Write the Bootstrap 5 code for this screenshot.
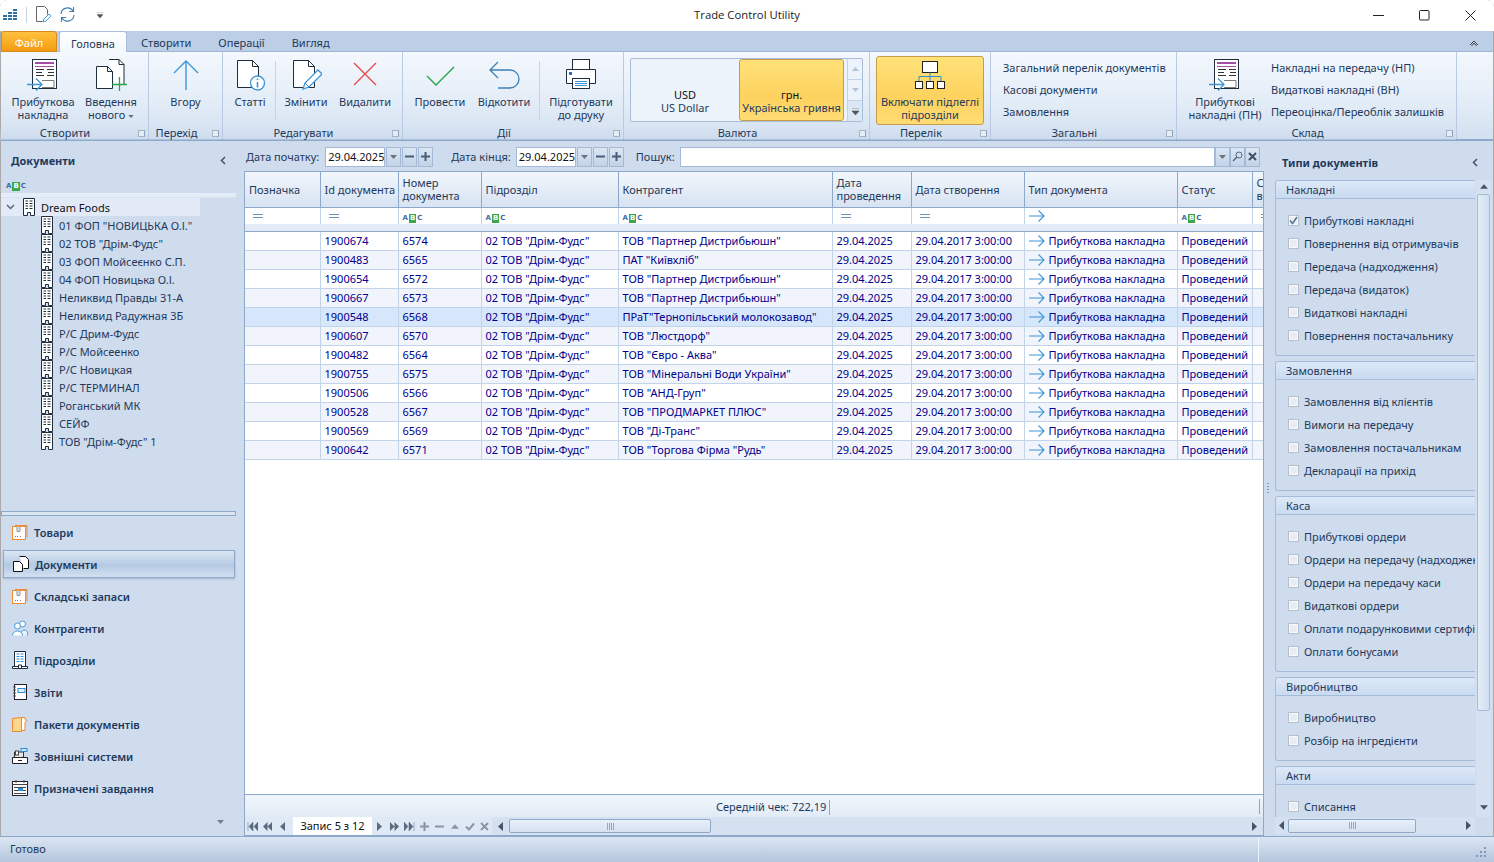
<!DOCTYPE html>
<html lang="uk">
<head>
<meta charset="utf-8">
<title>Trade Control Utility</title>
<link href="https://cdn.jsdelivr.net/npm/bootstrap@5.3.0/dist/css/bootstrap.min.css" rel="stylesheet">
<style>
html,body{height:100%;overflow:hidden;background:#fff}
body{font-family:"Noto Sans","DejaVu Sans",sans-serif;font-size:11px;line-height:13px;color:#1e395b}
.app{width:1494px;height:862px;outline:1px solid #a9a9a9;outline-offset:-1px;border-radius:7px 7px 0 0;overflow:hidden;display:flex;flex-direction:column}
.ttl{height:31px;background:#fff;flex:none;position:relative}
.ttl-q{gap:0;padding:6px 0 0 2px}
.ttl-name{position:absolute;left:0;right:0;top:7px;text-align:center;font:11.3px/16px "Open Sans",sans-serif;color:#222}
.ttl-b{position:absolute;top:0;right:1px;display:flex}
.ttl-b span{width:46px;height:30px;display:flex;align-items:center;justify-content:center}
.tabs{height:21px;background:#bdcfe6;flex:none;border-bottom:1px solid #9db6d6;padding-left:1px;gap:0}
.tb-file{width:56px;padding:4px 0 0;height:21px;text-align:center;color:#fff;background:linear-gradient(#ffc13d,#f49b0f);border:1px solid #d58a20;border-radius:3px 3px 0 0}
.tb-on{width:68px;margin-left:2px;padding:5px 0 0;text-align:center;height:22px;background:linear-gradient(#fff,#f2f7fd);border:1px solid #a9bfdc;border-bottom:0;border-radius:3px 3px 0 0}
.tb-a{padding:5px 0 0;margin-left:14px}
.tb-col{margin-left:auto;padding:4px 15px 0 0}
.rib{height:89px;flex:none;background:linear-gradient(#f4f8fd,#e2ecf7 60%,#d3e0f0);border-bottom:2px solid #8ea8ca}
.rg{height:87px;border-right:1px solid #b9cbe2;position:relative;flex:none;display:flex;flex-direction:column}
.rg-in{height:72px;display:flex;padding-top:3px}
.rg-lb{position:absolute;left:0;right:0;bottom:-1px;height:14px;text-align:center;line-height:14px;padding-right:18px;background:linear-gradient(rgba(200,216,235,0),rgba(200,216,235,.55))}
.rg-lc{position:absolute;right:3px;bottom:2px;width:7px;height:7px;border:1px solid #a5b5c8;border-right-color:#8ea0b6;background:#e6ecf4}
.rb{display:flex;flex-direction:column;align-items:center;text-align:center;padding-top:4px;flex:none}
.rb svg.rb-ic{display:block;margin-bottom:4px}
.rb-sp{width:1px;height:60px;background:#c5d4e7;margin:6px 0 0;flex:none}
.rl{display:flex;flex-direction:column;padding-top:2px;white-space:nowrap}
.rl span{height:22px;line-height:22px}
.gal{margin:3px 0 0 6px;width:233px;height:64px;border:1px solid #a9bdd8;background:#edf3fb;border-radius:2px;display:flex}
.gal-i{height:62px;text-align:center;padding-top:29px;flex:none}
.gal-u{width:108px;color:#1e395b}
.gal-h{width:105px;padding-top:28px;background:linear-gradient(#ffe27a,#fdd25e 60%,#ffdc74);border:1px solid #c89b4a;border-radius:3px}
.gal-k{color:#111}
.gal-s{margin-left:3px;width:15px;display:flex;flex-direction:column;border-left:1px solid #c3d3e7;color:#b3c2d6}
.gal-s span{flex:1;display:flex;align-items:center;justify-content:center;border-bottom:1px solid #c3d3e7}
.gal-s span:last-child{border-bottom:0;background:#dce7f4}
.rb-hot{width:108px;height:69px;margin:1px 0 0 6px;background:linear-gradient(#ffe27a,#fdd25e 60%,#ffdc74);border:1px solid #c89b4a;border-radius:3px;padding-top:3px}
.rb-hot svg.rb-ic{margin-bottom:3px}
.main{flex:1;min-height:0;background:#cfdcee;display:flex}
.lp{width:244px;flex:none;display:flex;flex-direction:column;padding-left:1px}
.lp-h{height:38px;padding:1px 18px 0 10px;font-weight:700;display:flex;align-items:center;justify-content:space-between}
.abc{display:inline-flex;font:700 7px/9px "DejaVu Sans",sans-serif;color:#3a6ea5;letter-spacing:0;align-items:center}
.abc b{background:#3ea64a;color:#fff;padding:0 1px;font-weight:700;margin:0 1px}
.lp-f{height:14px;padding:0 0 0 5px;display:flex;align-items:center}
.lp-sep{height:5px;background:#e4ecf7;border-bottom:1px solid #d8e3f1;margin-right:8px;flex:none}
.tree{height:313px;flex:none;color:#1e395b}
.tr-root{height:18px;width:199px;background:#e1eaf6;display:flex;align-items:center;color:#111;padding-left:5px}
.tr-root svg:first-child{margin-right:7px}
.tr-root svg:nth-child(2){margin-right:5px}
.tr-i{height:18px;display:flex;align-items:center;padding-left:39px;gap:5px;white-space:nowrap}
.sp-l{height:5px;border:1px solid #8ea8ca;background:#dce6f3;margin:0 8px 0 0;flex:none}
.nv{padding:0;flex:1}
.nv-i{height:32px;display:flex;align-items:center;gap:6px;font-weight:600;padding-left:11px;color:#1e395b}
.nv-on{height:28px;margin:2px 9px 2px 2px;padding-left:9px;border:1px solid #8ea8ca;background:linear-gradient(#dbe6f3,#b4c9e2 55%,#d3e1f1);box-shadow:0 1px 2px rgba(80,110,150,.35)}
.nv-dn{height:28px;text-align:right;padding:10px 20px 0 0;color:#6f7f93}
.cp{width:1020px;flex:none;display:flex;flex-direction:column}
.fb{height:30px;flex:none;display:flex;align-items:center;white-space:nowrap;padding:1px 0 0 2px}
.fld{height:20px;border-radius:0;padding:0 0 0 2px;font:11px/18px "Noto Sans",sans-serif;border:1px solid #a3b9d6;color:#111;background:#fff;flex:none;min-height:0}
.fld-d{width:60px;margin:0 1px 0 5px}
.fld-d1{margin-left:6px}
.fld-s{width:535px;margin-left:5px}
.fbt{width:15px;height:20px;background:linear-gradient(#dbe6f3,#c3d4e8);border:1px solid #a3b9d6;margin-right:1px;display:flex;align-items:center;justify-content:center;flex:none}
.grid{flex:1;min-height:0;background:#fff;border:1px solid #8ea8ca;border-bottom:0;display:flex;flex-direction:column}
.g-t{flex:1;min-height:0;overflow:hidden}
.tbl{table-layout:fixed;width:1030px;margin:0;border-collapse:collapse;--bs-table-bg:transparent;color:#00008b}
.tbl th,.tbl td{padding:0 4px;border:0;border-right:1px solid #c2d4ea;border-bottom:1px solid #c2d4ea;white-space:nowrap;overflow:hidden;font-weight:400;vertical-align:middle;height:19px;color:#00008b;box-shadow:none}
.tbl tr.hd th{height:35px;background:linear-gradient(#f1f6fc,#d7e3f2);border-right:1px solid #8ea8ca;border-bottom:1px solid #8ea8ca;color:#1e395b;line-height:13px;padding-top:0}
.tbl tr.fl td{height:17px;background:#fff;color:#5d7ea5;border-bottom:0}
.tbl tr.gp td{height:7px;padding:0;background:#e2ebf6;border:0;border-bottom:1px solid #8ea8ca}
.tbl tr.alt td{background:#f1f5fb}
.tbl tr.cur td{background:#d6e6fb}
.eq{display:block;width:10px;height:4px;border-top:1px solid #6f90b8;border-bottom:1px solid #6f90b8;margin-left:4px}
.ty{display:flex;align-items:center;gap:4px}
.g-s{height:23px;flex:none;background:linear-gradient(#f1f6fc,#e1ebf6);border-top:1px solid #8ea8ca;display:flex;color:#1e395b;padding-top:5px;position:relative}
.g-sv{margin-left:471px;padding-right:3px;border-right:1px solid #8ea8ca;height:15px}
.g-sr{position:absolute;left:1014px;top:4px;height:15px;width:1px;background:#8ea8ca}
.g-n{height:19px;flex:none;display:flex;background:#dfe9f5;align-items:center;border-bottom:1px solid #8ea8ca}
.nb{display:flex;align-items:center;justify-content:center;width:15px;height:17px;flex:none}
.n-rec{width:79px;height:18px;background:#fff;color:#111;text-align:center;line-height:18px;margin:0 0 0 3px;flex:none}
.n-sb{flex:1;height:18px;display:flex;align-items:center;background:#d5e1f0;margin-left:0;padding:0 3px;position:relative}
.sb-th{height:14px;background:linear-gradient(#e8f0f9,#d5e1f0);border:1px solid #8ea8ca;border-radius:2px;display:flex;align-items:center;justify-content:center}
.rp{flex:1;min-width:0;display:flex;flex-direction:column;position:relative}
.rp-h{height:39px;flex:none;display:flex;align-items:center;justify-content:space-between;font-weight:700;padding:3px 16px 0 18px}
.rp-b{flex:1;min-height:0;display:flex;padding-left:11px}
.rp-g{width:200px;flex:none;overflow:hidden}
.gb{border:1px solid #a5bcd9;border-right:0;border-radius:3px 0 0 3px;margin-bottom:5px;white-space:nowrap;overflow:hidden}
.gb-h{height:18px;background:linear-gradient(#dce8f7,#c9dbf1);border-bottom:1px solid #a5bcd9;padding:0 0 0 10px;line-height:17px}
.gb-b{padding:10px 0 8px 12px}
.ci{height:23px;display:flex;align-items:center;gap:5px}
.cbx{width:11px;height:11px;flex:none;border:1px solid #b3bfcd;background:#e9edf3;box-shadow:inset 0 0 0 1px #f7f9fc;display:flex;align-items:center;justify-content:center}
.rp-v{width:15px;flex:none;margin-left:1px;display:flex;flex-direction:column;align-items:center;background:#d5e1f0}
.v-th{width:13px;height:517px;background:linear-gradient(90deg,#e4edf7,#d0deef);border:1px solid #a5bcd9;border-radius:2px;margin:5px 0 94px}
.rp-hs{height:17px;flex:none;margin:0 19px 2px 11px;background:#d5e1f0;display:flex;align-items:center;padding:0 4px;justify-content:space-between}
.spl{position:absolute;left:3px;top:342px;width:2px;height:12px;background:repeating-linear-gradient(#7f99ba 0 1px,transparent 1px 3px)}
.stb{height:26px;flex:none;background:linear-gradient(#dbe6f3,#b4c6dd);border-top:1px solid #8ea8ca;display:flex;align-items:center;padding:0 0 2px 10px;position:relative}
.stb-l{position:absolute;left:1258px;top:1px;bottom:0;width:1px;background:#eef3fa}
.stb-g{position:absolute;right:8px;bottom:5px}
</style>
</head>
<body>
<svg width="0" height="0" class="position-absolute">
<defs>
<symbol id="i-inv" viewBox="0 0 32 32"><rect x="5.5" y=".5" width="24" height="29" fill="#fff" stroke="#1f2d3d"/><rect x="8" y="3" width="19" height="2" fill="#a64ca6"/><rect x="8" y="7" width="19" height="1" fill="#a64ca6"/><path d="M9 10.500h8M9 13.500h6M9 16.500h8M20 10.500h7M21 13.500h6M20 16.500h7" stroke="#333"/><path d="M15 21.500h12v7H15" fill="none" stroke="#7a7a7a"/><path d="M0 25.500h14M9 19.500l6 6-6 6" fill="none" stroke="#3d95d6" stroke-width="1.3"/></symbol>
<symbol id="i-new" viewBox="0 0 32 32"><path d="M14 .5h10l5 5v20h-9" fill="#fff" stroke="#1f2d3d"/><path d="M24 .5v5h5" fill="none" stroke="#1f2d3d"/><path d="M1.500 7.500h11l5 5v17h-16z" fill="#fff" stroke="#1f2d3d"/><path d="M12.500 7.500v5h5" fill="none" stroke="#1f2d3d"/><path d="M17 25.500h15M24.500 18v14" stroke="#27a54a" stroke-width="1.3"/></symbol>
<symbol id="i-up" viewBox="0 0 32 32"><path d="M16 31V2M4 14L16 2l12 12" fill="none" stroke="#3d95d6" stroke-width="1.4"/></symbol>
<symbol id="i-info" viewBox="0 0 32 32"><path d="M3.500 1.500h15l6 6v21h-21z" fill="#fff" stroke="#1f2d3d"/><path d="M18.500 1.500v6h6" fill="none" stroke="#1f2d3d"/><circle cx="23.500" cy="24" r="7" fill="#fff" stroke="#3d95d6" stroke-width="1.3"/><path d="M23.500 23v5.500M23.500 19.500v1.500" stroke="#3d95d6" stroke-width="1.6"/></symbol>
<symbol id="i-edit" viewBox="0 0 32 32"><path d="M3.500 1.500h15l6 6v21h-21z" fill="#fff" stroke="#1f2d3d"/><path d="M18.500 1.500v6h6" fill="none" stroke="#1f2d3d"/><path d="M13 30l2-6 13-13 4 4-13 13z" fill="#fff" stroke="#3d95d6" stroke-width="1.3"/><path d="M15 24l4 4" stroke="#3d95d6"/></symbol>
<symbol id="i-x" viewBox="0 0 32 32"><path d="M5 4l22 22M27 4L5 26" stroke="#e8474a" stroke-width="1.3" fill="none"/></symbol>
<symbol id="i-ok" viewBox="0 0 32 32"><path d="M3 17l9 9L30 8" stroke="#27a54a" stroke-width="1.4" fill="none"/></symbol>
<symbol id="i-undo" viewBox="0 0 32 32"><path d="M2 11h20a8 8 0 0 1 0 18H10M10 3l-8 8 8 8" stroke="#3f7fb5" stroke-width="1.3" fill="none"/></symbol>
<symbol id="i-prn" viewBox="0 0 32 32"><rect x="7.500" y=".5" width="17" height="10" fill="#fff" stroke="#1f2d3d"/><path d="M1.500 10.500h29v14h-6v-5h-17v5h-6z" fill="#fff" stroke="#1f2d3d"/><rect x="4" y="13" width="3" height="3" fill="#2b6fb3"/><rect x="7.500" y="19.500" width="17" height="10" fill="#fff" stroke="#1f2d3d"/><path d="M10 22.500h12M10 24.500h12M10 26.500h12" stroke="#3d95d6"/></symbol>
<symbol id="i-org" viewBox="0 0 32 32"><rect x="8.500" y="1.500" width="15" height="11" fill="#fff" stroke="#222"/><path d="M16 12.500v4M5 21v-4.500h22V21M16 16v5" fill="none" stroke="#2b8ed6"/><rect x="1.500" y="21.500" width="7" height="7" fill="#fff" stroke="#222"/><rect x="12.500" y="21.500" width="7" height="7" fill="#fff" stroke="#222"/><rect x="23.500" y="21.500" width="7" height="7" fill="#fff" stroke="#222"/></symbol>
<symbol id="i-bld" viewBox="0 0 14 18"><path d="M1.500.5h11v17h-4v-3h-3v3h-4z" fill="#fff" stroke="#1f2d3d"/><path d="M3.500 3h2.500M7.500 3h3M3.500 5.500h2.500M7.500 5.500h3M3.500 8h2.500M7.500 8h3M3.500 10.500h2.500M7.500 10.500h3" stroke="#1f2d3d"/></symbol>
<symbol id="i-bldb" viewBox="0 0 16 18"><path d="M2.500.5h11v15h-11zM.5 15.500h15v2H.5z" fill="#fff" stroke="#1f2d3d"/><path d="M4.500 3h3M8.500 3h3M4.500 5.500h3M8.500 5.500h3M4.500 8h3M8.500 8h3M4.500 10.500h3M8.500 10.500h3" stroke="#2b8ed6"/><path d="M6.500 17v-3h3v3" fill="#fff" stroke="#1f2d3d"/></symbol>
<symbol id="i-arr" viewBox="0 0 16 12"><path d="M0 6h15M9.500.5L15 6l-5.500 5.500" fill="none" stroke="#3d95d6" stroke-width="1.1"/></symbol>
<symbol id="i-box" viewBox="0 0 16 18"><path d="M3 2.500h12v12" fill="none" stroke="#ef8a2e"/><rect x=".5" y="3.500" width="13" height="13" fill="#fff" stroke="#ef8a2e"/><path d="M5 3.500v5h3v-5" fill="#ddd" stroke="#999"/><path d="M3 13.500h1M5 13.500h1M8 13.500h1" stroke="#777"/></symbol>
<symbol id="i-docs" viewBox="0 0 16 16"><path d="M6.500.5h6l3 3v9h-5" fill="#fff" stroke="#111"/><path d="M.5 5.500h6l3 3v7h-9z" fill="#fff" stroke="#111"/></symbol>
<symbol id="i-ppl" viewBox="0 0 16 16"><circle cx="10.500" cy="4" r="3" fill="#fff" stroke="#4a9bd8"/><path d="M9 15.500v-3c1-3 6-3 6.500 0v3" fill="#eaf3fb" stroke="#4a9bd8"/><circle cx="5.500" cy="6" r="3" fill="#fff" stroke="#4a9bd8"/><path d="M.5 15.500c0-6 10-6 10 0" fill="#fff" stroke="#4a9bd8"/></symbol>
<symbol id="i-rep" viewBox="0 0 16 16"><rect x="2.500" y=".5" width="12" height="15" fill="#fff" stroke="#222"/><path d="M1 3h3M1 6h3M1 9h3M1 12h3" stroke="#555"/><rect x="6" y="4.500" width="7" height="4" fill="#e4f1fb" stroke="#2b8ed6"/></symbol>
<symbol id="i-fol" viewBox="0 0 16 16"><path d="M10 1.500h3v2l2 1-2 2v8h-3" fill="#fff" stroke="#ef8a2e"/><path d="M.5 2.500l9-1v14h-9z" fill="#fbd78c" stroke="#ef8a2e"/></symbol>
<symbol id="i-ext" viewBox="0 0 16 16"><path d="M.5 9.500h15v6H.5z" fill="#fff" stroke="#222"/><path d="M2.500 9V4h9v5" fill="#e6e6e6" stroke="#333"/><rect x="3.500" y="3" width="3" height="4" fill="#fff" stroke="#444"/><rect x="9" y=".5" width="6" height="3" fill="#cfe6f8" stroke="#2b8ed6"/><path d="M6 12.500h4" stroke="#222"/></symbol>
<symbol id="i-cal" viewBox="0 0 16 16"><rect x=".5" y="1.500" width="15" height="14" fill="#fff" stroke="#222"/><path d="M.5 4.500h15M4 0v3M12 0v3M2 7.500h12M2 10.500h12M2 13.500h12" stroke="#444"/><rect x="6" y="8" width="5" height="3" fill="#2b8ed6"/></symbol>
<symbol id="t-dn" viewBox="0 0 7 4"><path d="M0 0h7L3.500 4z" fill="currentColor"/></symbol>
<symbol id="t-up" viewBox="0 0 7 4"><path d="M0 4h7L3.500 0z" fill="currentColor"/></symbol>
<symbol id="t-l" viewBox="0 0 5 9"><path d="M5 0v9L0 4.500z" fill="currentColor"/></symbol>
<symbol id="t-r" viewBox="0 0 5 9"><path d="M0 0v9l5-4.500z" fill="currentColor"/></symbol>
<symbol id="n-ll" viewBox="0 0 11 9"><path d="M1 0v9M6 0v9L2 4.500zM11 0v9L7 4.500z" fill="#5a6b80" stroke="#5a6b80" stroke-width=".5"/></symbol>
<symbol id="n-rr" viewBox="0 0 11 9"><path d="M10 0v9M5 0v9L9 4.500zM0 0v9L4 4.500z" fill="#5a6b80" stroke="#5a6b80" stroke-width=".5"/></symbol>
<symbol id="n-l2" viewBox="0 0 9 9"><path d="M4.500 0v9L0 4.500zM9 0v9L4.500 4.500z" fill="#5a6b80"/></symbol>
<symbol id="n-r2" viewBox="0 0 9 9"><path d="M0 0v9l4.500-4.500zM4.500 0v9L9 4.500z" fill="#5a6b80"/></symbol>
<symbol id="i-chk" viewBox="0 0 9 9"><path d="M1 4.500l2.500 3L8 1" fill="none" stroke="#5d7290" stroke-width="1.6"/></symbol>
</defs>
</svg>

<div class="app">
  <div class="ttl">
    <div class="ttl-q d-flex align-items-center">
      <svg width="16" height="15" viewBox="0 0 16 15" class="me-2"><path d="M11 2h4v2h-4zM6 5h4v2H6zM11 5h4v2h-4zM1 8h4v2H1zM6 8h4v2H6zM11 8h4v2h-4zM1 11h4v2H1zM6 11h4v2H6zM11 11h4v2h-4z" fill="#2e6f9e"/></svg>
      <span class="d-block" style="width:1px;height:16px;background:#c9d3de"></span>
      <svg width="16" height="17" viewBox="0 0 16 17" class="ms-2"><path d="M1.500.5h8l3 3v5M1.500.5v15h6" fill="none" stroke="#666"/><path d="M8 16l1-3 5-5 2 2-5 5z" fill="#fff" stroke="#4a9bd8"/></svg>
      <svg width="17" height="17" viewBox="0 0 17 17" class="ms-2"><path d="M2 8a6.500 6.500 0 0 1 12-3M15 9a6.500 6.500 0 0 1-12 3M14.500 1v4.500H10M2.500 16v-4.500H7" fill="none" stroke="#3d7fb8" stroke-width="1.1"/></svg>
      <svg width="6" height="6" viewBox="0 0 7 7" style="margin-left:21px"><path d="M0 0h7M0 3h7L3.500 7z" fill="#555" stroke="#555" stroke-width=".6"/></svg>
    </div>
    <div class="ttl-name">Trade Control Utility</div>
    <div class="ttl-b">
      <span><svg width="11" height="11" viewBox="0 0 11 11"><path d="M0 5.500h11" stroke="#222"/></svg></span>
      <span><svg width="11" height="11" viewBox="0 0 11 11"><rect x=".5" y=".5" width="9.500" height="9.500" rx="1" fill="none" stroke="#222"/></svg></span>
      <span><svg width="11" height="11" viewBox="0 0 11 11"><path d="M.5.5l10 10M10.500.5l-10 10" stroke="#222"/></svg></span>
    </div>
  </div>

  <div class="tabs d-flex">
    <div class="tb-file">Файл</div>
    <div class="tb-on">Головна</div>
    <div class="tb-a">Створити</div>
    <div class="tb-a" style="margin-left:27px">Операції</div>
    <div class="tb-a" style="margin-left:27px">Вигляд</div>
    <div class="tb-col"><svg width="10" height="7" viewBox="0 0 10 7"><path d="M1 5l4-4 4 4M2.500 6l2.500-3 2.500 3" fill="none" stroke="#444"/></svg></div>
  </div>

  <div class="rib d-flex">
    <div class="rg" style="width:149px"><div class="rg-in">
      <div class="rb" style="width:76px;margin-left:5px"><svg class="rb-ic" width="32" height="32"><use href="#i-inv"/></svg>Прибуткова<br>накладна</div>
      <div class="rb" style="width:60px"><svg class="rb-ic" width="32" height="32"><use href="#i-new"/></svg>Введення<br><span>нового <svg width="6" height="3" class="align-middle" style="color:#5a6b80"><use href="#t-dn"/></svg></span></div>
    </div><div class="rg-lb">Створити</div><span class="rg-lc"></span></div>
    <div class="rg" style="width:74px"><div class="rg-in justify-content-center">
      <div class="rb"><svg class="rb-ic" width="32" height="32"><use href="#i-up"/></svg>Вгору</div>
    </div><div class="rg-lb">Перехід</div><span class="rg-lc"></span></div>
    <div class="rg" style="width:180px"><div class="rg-in">
      <div class="rb" style="width:44px;margin-left:5px"><svg class="rb-ic" width="32" height="32"><use href="#i-info"/></svg>Статті</div>
      <div class="rb-sp" style="margin-left:3px"></div>
      <div class="rb" style="width:46px;margin-left:7px"><svg class="rb-ic" width="32" height="32"><use href="#i-edit"/></svg>Змінити</div>
      <div class="rb" style="width:56px;margin-left:8px"><svg class="rb-ic" width="32" height="32"><use href="#i-x"/></svg>Видалити</div>
    </div><div class="rg-lb">Редагувати</div><span class="rg-lc"></span></div>
    <div class="rg" style="width:221px"><div class="rg-in">
      <div class="rb" style="width:56px;margin-left:9px"><svg class="rb-ic" width="32" height="32"><use href="#i-ok"/></svg>Провести</div>
      <div class="rb" style="width:58px;margin-left:7px"><svg class="rb-ic" width="32" height="32"><use href="#i-undo"/></svg>Відкотити</div>
      <div class="rb-sp" style="margin-left:6px"></div>
      <div class="rb" style="width:72px;margin-left:5px"><svg class="rb-ic" width="32" height="32"><use href="#i-prn"/></svg>Підготувати<br>до друку</div>
    </div><div class="rg-lb">Дії</div><span class="rg-lc"></span></div>
    <div class="rg" style="width:246px"><div class="rg-in">
      <div class="gal">
        <div class="gal-i gal-u"><span class="gal-k">USD</span><br>US Dollar</div>
        <div class="gal-i gal-h"><span class="gal-k">грн.</span><br>Українська гривня</div>
        <div class="gal-s">
          <span><svg width="7" height="4"><use href="#t-up"/></svg></span>
          <span><svg width="7" height="4"><use href="#t-dn"/></svg></span>
          <span><svg width="7" height="7" viewBox="0 0 7 7"><path d="M0 0h7M0 3h7L3.500 7z" fill="#555" stroke="#555" stroke-width=".6"/></svg></span>
        </div>
      </div>
    </div><div class="rg-lb">Валюта</div><span class="rg-lc"></span></div>
    <div class="rg" style="width:121px"><div class="rg-in">
      <div class="rb rb-hot"><svg class="rb-ic" width="32" height="32"><use href="#i-org"/></svg>Включати підлеглі<br>підрозділи</div>
    </div><div class="rg-lb">Перелік</div><span class="rg-lc"></span></div>
    <div class="rg" style="width:186px"><div class="rg-in">
      <div class="rl" style="margin-left:12px"><span>Загальний перелік документів</span><span>Касові документи</span><span>Замовлення</span></div>
    </div><div class="rg-lb">Загальні</div><span class="rg-lc"></span></div>
    <div class="rg" style="width:280px"><div class="rg-in">
      <div class="rb" style="width:86px;margin-left:5px"><svg class="rb-ic" width="32" height="32"><use href="#i-inv"/></svg>Прибуткові<br>накладні (ПН)</div>
      <div class="rl" style="margin-left:3px"><span>Накладні на передачу (НП)</span><span>Видаткові накладні (ВН)</span><span>Переоцінка/Переоблік залишків</span></div>
    </div><div class="rg-lb">Склад</div><span class="rg-lc"></span></div>
  </div>

  <div class="main">
    <div class="lp">
      <div class="lp-h"><span>Документи</span><svg width="6" height="9" viewBox="0 0 6 9"><path d="M5 1L1.500 4.500 5 8" fill="none" stroke="#44546a" stroke-width="1.500"/></svg></div>
      <div class="lp-f"><span class="abc">A<b>B</b>C</span></div>
      <div class="lp-sep"></div>
      <div class="tree">
        <div class="tr-root"><svg width="9" height="6" viewBox="0 0 9 6"><path d="M1 1l3.500 3.500L8 1" fill="none" stroke="#55677f" stroke-width="1.500"/></svg><svg width="14" height="18"><use href="#i-bld"/></svg><span>Dream Foods</span></div>
        <div class="tr-i"><svg width="14" height="18"><use href="#i-bld"/></svg>01 ФОП "НОВИЦЬКА О.І."</div>
        <div class="tr-i"><svg width="14" height="18"><use href="#i-bld"/></svg>02 ТОВ "Дрім-Фудс"</div>
        <div class="tr-i"><svg width="14" height="18"><use href="#i-bld"/></svg>03 ФОП Мойсеєнко С.П.</div>
        <div class="tr-i"><svg width="14" height="18"><use href="#i-bld"/></svg>04 ФОП Новицька О.І.</div>
        <div class="tr-i"><svg width="14" height="18"><use href="#i-bld"/></svg>Неликвид Правды 31-А</div>
        <div class="tr-i"><svg width="14" height="18"><use href="#i-bld"/></svg>Неликвид Радужная 3Б</div>
        <div class="tr-i"><svg width="14" height="18"><use href="#i-bld"/></svg>Р/С Дрим-Фудс</div>
        <div class="tr-i"><svg width="14" height="18"><use href="#i-bld"/></svg>Р/С Мойсеенко</div>
        <div class="tr-i"><svg width="14" height="18"><use href="#i-bld"/></svg>Р/С Новицкая</div>
        <div class="tr-i"><svg width="14" height="18"><use href="#i-bld"/></svg>Р/С ТЕРМИНАЛ</div>
        <div class="tr-i"><svg width="14" height="18"><use href="#i-bld"/></svg>Роганський МК</div>
        <div class="tr-i"><svg width="14" height="18"><use href="#i-bld"/></svg>СЕЙФ</div>
        <div class="tr-i"><svg width="14" height="18"><use href="#i-bld"/></svg>ТОВ "Дрім-Фудс" 1</div>
      </div>
      <div class="sp-l"></div>
      <div class="nv">
        <div class="nv-i"><svg width="16" height="18"><use href="#i-box"/></svg>Товари</div>
        <div class="nv-i nv-on"><svg width="16" height="16"><use href="#i-docs"/></svg>Документи</div>
        <div class="nv-i"><svg width="16" height="18"><use href="#i-box"/></svg>Складські запаси</div>
        <div class="nv-i"><svg width="16" height="16"><use href="#i-ppl"/></svg>Контрагенти</div>
        <div class="nv-i"><svg width="16" height="18"><use href="#i-bldb"/></svg>Підрозділи</div>
        <div class="nv-i"><svg width="16" height="16"><use href="#i-rep"/></svg>Звіти</div>
        <div class="nv-i"><svg width="16" height="16"><use href="#i-fol"/></svg>Пакети документів</div>
        <div class="nv-i"><svg width="16" height="16"><use href="#i-ext"/></svg>Зовнішні системи</div>
        <div class="nv-i"><svg width="16" height="16"><use href="#i-cal"/></svg>Призначені завдання</div>
        <div class="nv-dn"><svg width="7" height="4"><use href="#t-dn"/></svg></div>
      </div>
    </div>

    <div class="cp">
      <div class="fb">
        <span>Дата початку:</span>
        <input class="form-control fld fld-d fld-d1" value="29.04.2025">
        <span class="fbt text-secondary"><svg width="7" height="4"><use href="#t-dn"/></svg></span>
        <span class="fbt"><svg width="9" height="9" viewBox="0 0 9 9"><path d="M0 4.500h9" stroke="#4a5d78" stroke-width="2"/></svg></span>
        <span class="fbt me-0"><svg width="9" height="9" viewBox="0 0 9 9"><path d="M0 4.500h9M4.500 0v9" stroke="#4a5d78" stroke-width="2"/></svg></span>
        <span style="margin-left:18px">Дата кінця:</span>
        <input class="form-control fld fld-d" value="29.04.2025">
        <span class="fbt text-secondary"><svg width="7" height="4"><use href="#t-dn"/></svg></span>
        <span class="fbt"><svg width="9" height="9" viewBox="0 0 9 9"><path d="M0 4.500h9" stroke="#4a5d78" stroke-width="2"/></svg></span>
        <span class="fbt me-0"><svg width="9" height="9" viewBox="0 0 9 9"><path d="M0 4.500h9M4.500 0v9" stroke="#4a5d78" stroke-width="2"/></svg></span>
        <span style="margin-left:12px">Пошук:</span>
        <input class="form-control fld fld-s" value="">
        <span class="fbt me-0 text-secondary"><svg width="7" height="4"><use href="#t-dn"/></svg></span>
        <span class="fbt me-0"><svg width="11" height="11" viewBox="0 0 11 11"><circle cx="7" cy="4" r="3" fill="none" stroke="#55677f"/><path d="M5 6l-4 4" stroke="#55677f" stroke-width="1.500"/></svg></span>
        <span class="fbt me-0"><svg width="9" height="9" viewBox="0 0 9 9"><path d="M1 1l7 7M8 1L1 8" stroke="#3e5068" stroke-width="2"/></svg></span>
      </div>
      <div class="grid">
        <div class="g-t">
          <table class="table tbl">
            <colgroup><col style="width:75px"><col style="width:78px"><col style="width:83px"><col style="width:137px"><col style="width:214px"><col style="width:79px"><col style="width:113px"><col style="width:153px"><col style="width:75px"><col style="width:23px"></colgroup>
            <tr class="hd"><th>Позначка</th><th>Id документа</th><th>Номер<br>документа</th><th>Підрозділ</th><th>Контрагент</th><th>Дата<br>проведення</th><th>Дата створення</th><th>Тип документа</th><th>Статус</th><th>Сума<br>в</th></tr>
            <tr class="fl"><td><span class="eq"></span></td><td><span class="eq"></span></td><td><span class="abc">A<b>B</b>C</span></td><td><span class="abc">A<b>B</b>C</span></td><td><span class="abc">A<b>B</b>C</span></td><td><span class="eq"></span></td><td><span class="eq"></span></td><td><svg width="16" height="12" class="d-block"><use href="#i-arr"/></svg></td><td><span class="abc">A<b>B</b>C</span></td><td><span class="eq"></span></td></tr>
            <tr class="gp"><td colspan="10"></td></tr>
            <tr><td></td><td>1900674</td><td>6574</td><td>02 ТОВ "Дрім-Фудс"</td><td>ТОВ "Партнер Дистрибьюшн"</td><td>29.04.2025</td><td>29.04.2017 3:00:00</td><td><div class="ty"><svg width="16" height="12"><use href="#i-arr"/></svg>Прибуткова накладна</div></td><td>Проведений</td><td></td></tr>
            <tr class="alt"><td></td><td>1900483</td><td>6565</td><td>02 ТОВ "Дрім-Фудс"</td><td>ПАТ "Київхліб"</td><td>29.04.2025</td><td>29.04.2017 3:00:00</td><td><div class="ty"><svg width="16" height="12"><use href="#i-arr"/></svg>Прибуткова накладна</div></td><td>Проведений</td><td></td></tr>
            <tr><td></td><td>1900654</td><td>6572</td><td>02 ТОВ "Дрім-Фудс"</td><td>ТОВ "Партнер Дистрибьюшн"</td><td>29.04.2025</td><td>29.04.2017 3:00:00</td><td><div class="ty"><svg width="16" height="12"><use href="#i-arr"/></svg>Прибуткова накладна</div></td><td>Проведений</td><td></td></tr>
            <tr class="alt"><td></td><td>1900667</td><td>6573</td><td>02 ТОВ "Дрім-Фудс"</td><td>ТОВ "Партнер Дистрибьюшн"</td><td>29.04.2025</td><td>29.04.2017 3:00:00</td><td><div class="ty"><svg width="16" height="12"><use href="#i-arr"/></svg>Прибуткова накладна</div></td><td>Проведений</td><td></td></tr>
            <tr class="cur"><td></td><td>1900548</td><td>6568</td><td>02 ТОВ "Дрім-Фудс"</td><td>ПРаТ"Тернопільський молокозавод"</td><td>29.04.2025</td><td>29.04.2017 3:00:00</td><td><div class="ty"><svg width="16" height="12"><use href="#i-arr"/></svg>Прибуткова накладна</div></td><td>Проведений</td><td></td></tr>
            <tr class="alt"><td></td><td>1900607</td><td>6570</td><td>02 ТОВ "Дрім-Фудс"</td><td>ТОВ "Люстдорф"</td><td>29.04.2025</td><td>29.04.2017 3:00:00</td><td><div class="ty"><svg width="16" height="12"><use href="#i-arr"/></svg>Прибуткова накладна</div></td><td>Проведений</td><td></td></tr>
            <tr><td></td><td>1900482</td><td>6564</td><td>02 ТОВ "Дрім-Фудс"</td><td>ТОВ "Євро - Аква"</td><td>29.04.2025</td><td>29.04.2017 3:00:00</td><td><div class="ty"><svg width="16" height="12"><use href="#i-arr"/></svg>Прибуткова накладна</div></td><td>Проведений</td><td></td></tr>
            <tr class="alt"><td></td><td>1900755</td><td>6575</td><td>02 ТОВ "Дрім-Фудс"</td><td>ТОВ "Мінеральні Води України"</td><td>29.04.2025</td><td>29.04.2017 3:00:00</td><td><div class="ty"><svg width="16" height="12"><use href="#i-arr"/></svg>Прибуткова накладна</div></td><td>Проведений</td><td></td></tr>
            <tr><td></td><td>1900506</td><td>6566</td><td>02 ТОВ "Дрім-Фудс"</td><td>ТОВ "АНД-Груп"</td><td>29.04.2025</td><td>29.04.2017 3:00:00</td><td><div class="ty"><svg width="16" height="12"><use href="#i-arr"/></svg>Прибуткова накладна</div></td><td>Проведений</td><td></td></tr>
            <tr class="alt"><td></td><td>1900528</td><td>6567</td><td>02 ТОВ "Дрім-Фудс"</td><td>ТОВ "ПРОДМАРКЕТ ПЛЮС"</td><td>29.04.2025</td><td>29.04.2017 3:00:00</td><td><div class="ty"><svg width="16" height="12"><use href="#i-arr"/></svg>Прибуткова накладна</div></td><td>Проведений</td><td></td></tr>
            <tr><td></td><td>1900569</td><td>6569</td><td>02 ТОВ "Дрім-Фудс"</td><td>ТОВ "Ді-Транс"</td><td>29.04.2025</td><td>29.04.2017 3:00:00</td><td><div class="ty"><svg width="16" height="12"><use href="#i-arr"/></svg>Прибуткова накладна</div></td><td>Проведений</td><td></td></tr>
            <tr class="alt"><td></td><td>1900642</td><td>6571</td><td>02 ТОВ "Дрім-Фудс"</td><td>ТОВ "Торгова Фірма "Рудь"</td><td>29.04.2025</td><td>29.04.2017 3:00:00</td><td><div class="ty"><svg width="16" height="12"><use href="#i-arr"/></svg>Прибуткова накладна</div></td><td>Проведений</td><td></td></tr>
          </table>
        </div>
        <div class="g-s"><span class="g-sv">Середній чек: 722,19</span><span class="g-sr"></span></div>
        <div class="g-n">
          <span class="nb"><svg width="11" height="9"><use href="#n-ll"/></svg></span>
          <span class="nb"><svg width="9" height="9"><use href="#n-l2"/></svg></span>
          <span class="nb" style="color:#5a6b80"><svg width="5" height="9"><use href="#t-l"/></svg></span>
          <span class="n-rec">Запис 5 з 12</span>
          <span class="nb" style="color:#5a6b80"><svg width="5" height="9"><use href="#t-r"/></svg></span>
          <span class="nb"><svg width="9" height="9"><use href="#n-r2"/></svg></span>
          <span class="nb"><svg width="11" height="9"><use href="#n-rr"/></svg></span>
          <span class="nb"><svg width="9" height="9" viewBox="0 0 9 9"><path d="M0 4.500h9M4.500 0v9" stroke="#8a96a6" stroke-width="2"/></svg></span>
          <span class="nb"><svg width="9" height="9" viewBox="0 0 9 9"><path d="M0 4.500h9" stroke="#8a96a6" stroke-width="2"/></svg></span>
          <span class="nb" style="color:#8a96a6"><svg width="8" height="5"><use href="#t-up"/></svg></span>
          <span class="nb"><svg width="10" height="9" viewBox="0 0 10 9"><path d="M1 4.500l3 3L9 1.500" fill="none" stroke="#8a96a6" stroke-width="2"/></svg></span>
          <span class="nb"><svg width="9" height="9" viewBox="0 0 9 9"><path d="M1 1l7 7M8 1L1 8" stroke="#8a96a6" stroke-width="2"/></svg></span>
          <div class="n-sb">
            <svg width="5" height="9" style="color:#44546a;margin:0 6px 0 3px"><use href="#t-l"/></svg>
            <div class="sb-th" style="width:202px"><svg width="7" height="7" viewBox="0 0 7 7"><path d="M.5 0v7M2.500 0v7M4.500 0v7M6.500 0v7" stroke="#8ea8ca"/></svg></div>
            <svg width="5" height="9" class="ms-auto" style="color:#44546a;margin-right:3px"><use href="#t-r"/></svg>
          </div>
        </div>
      </div>
    </div>

    <div class="rp">
      <span class="spl"></span>
      <div class="rp-h"><span>Типи документів</span><svg width="6" height="9" viewBox="0 0 6 9"><path d="M5 1L1.500 4.500 5 8" fill="none" stroke="#44546a" stroke-width="1.500"/></svg></div>
      <div class="rp-b">
        <div class="rp-g">
          <div class="gb"><div class="gb-h">Накладні</div><div class="gb-b">
            <div class="ci"><span class="cbx"><svg width="9" height="9"><use href="#i-chk"/></svg></span>Прибуткові накладні</div>
            <div class="ci"><span class="cbx"></span>Повернення від отримувачів</div>
            <div class="ci"><span class="cbx"></span>Передача (надходження)</div>
            <div class="ci"><span class="cbx"></span>Передача (видаток)</div>
            <div class="ci"><span class="cbx"></span>Видаткові накладні</div>
            <div class="ci"><span class="cbx"></span>Повернення постачальнику</div>
          </div></div>
          <div class="gb"><div class="gb-h">Замовлення</div><div class="gb-b">
            <div class="ci"><span class="cbx"></span>Замовлення від клієнтів</div>
            <div class="ci"><span class="cbx"></span>Вимоги на передачу</div>
            <div class="ci"><span class="cbx"></span>Замовлення постачальникам</div>
            <div class="ci"><span class="cbx"></span>Декларації на прихід</div>
          </div></div>
          <div class="gb"><div class="gb-h">Каса</div><div class="gb-b">
            <div class="ci"><span class="cbx"></span>Прибуткові ордери</div>
            <div class="ci"><span class="cbx"></span>Ордери на передачу (надходження)</div>
            <div class="ci"><span class="cbx"></span>Ордери на передачу каси</div>
            <div class="ci"><span class="cbx"></span>Видаткові ордери</div>
            <div class="ci"><span class="cbx"></span>Оплати подарунковими сертифікатами</div>
            <div class="ci"><span class="cbx"></span>Оплати бонусами</div>
          </div></div>
          <div class="gb"><div class="gb-h">Виробництво</div><div class="gb-b">
            <div class="ci"><span class="cbx"></span>Виробництво</div>
            <div class="ci"><span class="cbx"></span>Розбір на інгредієнти</div>
          </div></div>
          <div class="gb"><div class="gb-h">Акти</div><div class="gb-b">
            <div class="ci"><span class="cbx"></span>Списання</div>
          </div></div>
        </div>
        <div class="rp-v">
          <svg width="8" height="5" class="mt-1" style="color:#44546a"><use href="#t-up"/></svg>
          <div class="v-th"></div>
          <svg width="8" height="5" style="color:#44546a"><use href="#t-dn"/></svg>
        </div>
      </div>
      <div class="rp-hs">
        <svg width="5" height="9" style="color:#44546a"><use href="#t-l"/></svg>
        <div class="sb-th" style="width:128px;margin-left:4px;margin-right:auto"><svg width="7" height="7" viewBox="0 0 7 7"><path d="M.5 0v7M2.500 0v7M4.500 0v7M6.500 0v7" stroke="#8ea8ca"/></svg></div>
        <svg width="5" height="9" style="color:#44546a"><use href="#t-r"/></svg>
      </div>
    </div>
  </div>

  <div class="stb">Готово<span class="stb-l"></span>
    <svg class="stb-g" width="11" height="11" viewBox="0 0 11 11"><path d="M9 1h2v2H9zM5 5h2v2H5zM9 5h2v2H9zM1 9h2v2H1zM5 9h2v2H5zM9 9h2v2H9z" fill="#8297b3"/></svg>
  </div>
</div>
<script src="https://cdn.jsdelivr.net/npm/bootstrap@5.3.0/dist/js/bootstrap.bundle.min.js"></script>
</body>
</html>
